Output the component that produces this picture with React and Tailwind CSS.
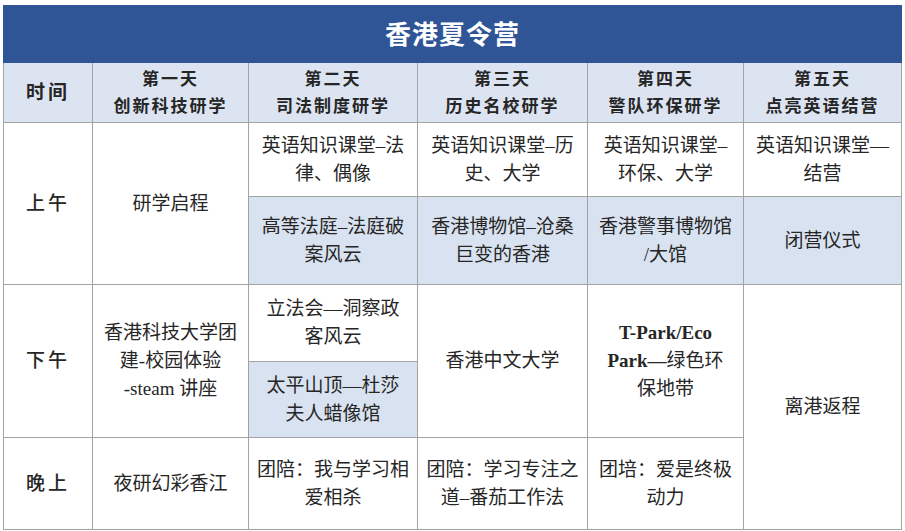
import React from "react";

const FONT = { fontFamily: '"Liberation Serif", "Noto Sans CJK SC", serif' };

function Cell({ className = "", children }) {
  return (
    <div
      className={
        "flex items-center justify-center text-center text-[19px] leading-[28px] text-[#262626] " +
        className
      }
    >
      <div>{children}</div>
    </div>
  );
}

function Lines({ lines }) {
  return lines.map((l, i) => <div key={i}>{l}</div>);
}

export default function App() {
  const white = "bg-white";
  const shade = "bg-[#d9e2f0]";
  const head = "bg-[#dce4f1]";
  return (
    <div className="w-[905px] h-[531px] bg-white pt-[5px] pl-[3px]" style={FONT}>
      <div className="w-[899px]">
        <div className="h-[58px] bg-[#2f5597] flex items-center justify-center pt-[2px] text-white text-[26px] font-bold tracking-[1px]">
          香港夏令营
        </div>
        <div className="grid grid-cols-[88px_155px_168px_169px_155px_157px] grid-rows-[59px_73px_87px_76px_75px_91px] gap-px bg-[#a3a3a3] px-px pb-px">
          {/* header */}
          <Cell className={head + " font-bold tracking-[3px] text-[#1e2433]"}>时间</Cell>
          {[
            ["第一天", "创新科技研学"],
            ["第二天", "司法制度研学"],
            ["第三天", "历史名校研学"],
            ["第四天", "警队环保研学"],
            ["第五天", "点亮英语结营"],
          ].map(([a, b], i) => (
            <Cell key={i} className={head + " font-bold !text-[17px] !leading-[27px] tracking-[2px] text-[#1e2433]"}>
              <div>{a}</div>
              <div>{b}</div>
            </Cell>
          ))}

          {/* morning */}
          <Cell className={white + " row-span-2 font-medium tracking-[3px]"}>上午</Cell>
          <Cell className={white + " row-span-2"}>研学启程</Cell>
          <Cell className={white}><Lines lines={["英语知识课堂–法", "律、偶像"]} /></Cell>
          <Cell className={white}><Lines lines={["英语知识课堂–历", "史、大学"]} /></Cell>
          <Cell className={white}><Lines lines={["英语知识课堂–", "环保、大学"]} /></Cell>
          <Cell className={white}><Lines lines={["英语知识课堂—", "结营"]} /></Cell>
          <Cell className={shade}><Lines lines={["高等法庭–法庭破", "案风云"]} /></Cell>
          <Cell className={shade}><Lines lines={["香港博物馆–沧桑", "巨变的香港"]} /></Cell>
          <Cell className={shade}><Lines lines={["香港警事博物馆", "/大馆"]} /></Cell>
          <Cell className={shade}>闭营仪式</Cell>

          {/* afternoon */}
          <Cell className={white + " row-span-2 font-medium tracking-[3px]"}>下午</Cell>
          <Cell className={white + " row-span-2"}>
            <Lines lines={["香港科技大学团", "建-校园体验", "-steam 讲座"]} />
          </Cell>
          <Cell className={white}><Lines lines={["立法会—洞察政", "客风云"]} /></Cell>
          <Cell className={white + " row-span-2"}>香港中文大学</Cell>
          <Cell className={white + " row-span-2"}>
            <div className="font-bold">T-Park/Eco</div>
            <div><span className="font-bold">Park—</span>绿色环</div>
            <div>保地带</div>
          </Cell>
          <Cell className={white + " row-span-3"}>离港返程</Cell>
          <Cell className={shade}><Lines lines={["太平山顶—杜莎", "夫人蜡像馆"]} /></Cell>

          {/* evening */}
          <Cell className={white + " font-medium tracking-[3px]"}>晚上</Cell>
          <Cell className={white}>夜研幻彩香江</Cell>
          <Cell className={white}><Lines lines={["团陪：我与学习相", "爱相杀"]} /></Cell>
          <Cell className={white}><Lines lines={["团陪：学习专注之", "道–番茄工作法"]} /></Cell>
          <Cell className={white}><Lines lines={["团培：爱是终极", "动力"]} /></Cell>
        </div>
      </div>
    </div>
  );
}
